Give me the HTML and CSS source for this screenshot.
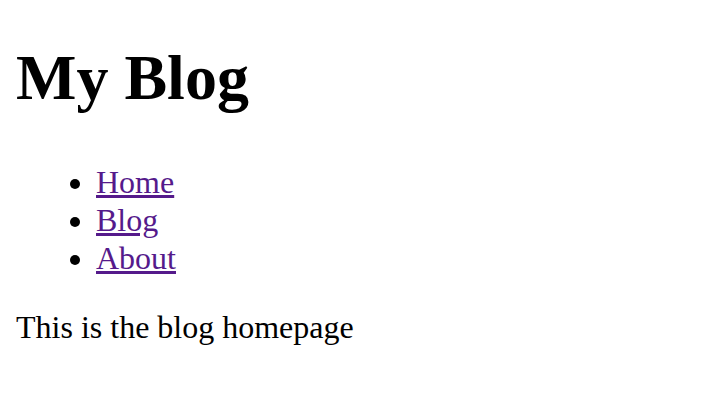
FILE: index.html
```html
<!DOCTYPE html>
<html>
<head>
<meta charset="utf-8">
<link rel="stylesheet" href="styles.css">
</head>
<body class="page">
<h1 class="title">My Blog</h1>
<ul class="nav">
<li class="item"><a class="link" href="#">Home</a></li>
<li class="item"><a class="link" href="#">Blog</a></li>
<li class="item"><a class="link" href="#">About</a></li>
</ul>
<p class="intro">This is the blog homepage</p>
</body>
</html>
```
FILE: styles.css
```css
.page {
  margin: 16px;
  font-family: "Liberation Serif", "Times New Roman", serif;
  font-size: 32px;
  color: #000;
  background: #fff;
}
.title {
  font-size: 64px;
  font-weight: bold;
  margin: 25px 0 48px;
}
.nav {
  margin: 32px 0;
  padding-left: 80px;
  list-style: disc;
}
.item {
  line-height: 38px;
}
.link {
  color: #551a8b;
  text-decoration: underline;
}
.intro {
  margin: 32px 0;
}
```
